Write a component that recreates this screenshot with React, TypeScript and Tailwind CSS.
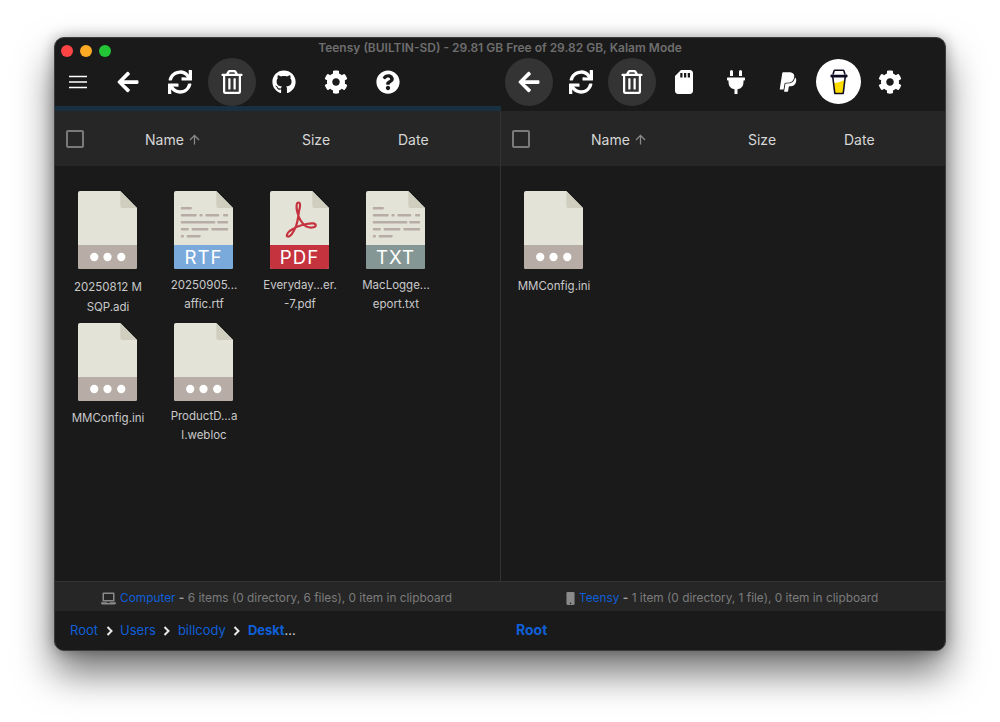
import React from "react";
import { FaArrowLeft, FaSync, FaRegTrashAlt, FaGithub, FaCog, FaQuestionCircle, FaSdCard, FaPlug, FaPaypal, FaLaptop, FaMobile } from "react-icons/fa";
import { MdArrowUpward } from "react-icons/md";

const font = "font-['Inter','Liberation_Sans',sans-serif]";

function Lines() {
  const rows = [
    [[7, 11]],
    [[7, 16], [26, 3], [32, 14], [50, 5]],
    [[7, 35], [44, 11]],
    [[7, 8], [18, 17], [38, 17]],
    [[7, 3], [13, 14]],
  ];
  return (
    <g fill="#b8aca6">
      {rows.map((r, i) => r.map((s, j) => <rect key={`${i}-${j}`} x={s[0]} y={16 + i * 7} width={s[1]} height="2.4" rx="0.6" />))}
    </g>
  );
}

function FileIcon({ kind }: { kind: "blank" | "rtf" | "pdf" | "txt" }) {
  const band = kind === "blank" ? "#b8aca6" : kind === "rtf" ? "#7aa9dc" : kind === "pdf" ? "#c5333f" : "#859795";
  return (
    <svg width="59" height="78" viewBox="0 0 60 78" preserveAspectRatio="none" className="block mr-[2px]">
      <path d="M2 0H43L60 17V76a2 2 0 0 1-2 2H2a2 2 0 0 1-2-2V2a2 2 0 0 1 2-2Z" fill="#e4e3d8" />
      <path d="M43 0L60 17H45a2 2 0 0 1-2-2Z" fill="#cfcebf" />
      <path d="M0 54H60V76a2 2 0 0 1-2 2H2a2 2 0 0 1-2-2Z" fill={band} />
      {kind === "blank" && (
        <g fill="#fff">
          <circle cx="16.5" cy="66" r="4.2" />
          <circle cx="30" cy="66" r="4.2" />
          <circle cx="44" cy="66" r="4.2" />
        </g>
      )}
      {(kind === "rtf" || kind === "txt") && <Lines />}
      {kind === "pdf" && (
        <path
          d="M29.5 20C31 15 31 11.5 29 11.5C27 11.5 26.5 15 27.5 20C29 27 33 33 37 35.5C40 37 46 37 46.5 34.5C47 32 42 32 37 33C30 34.5 24 37 20 40C17 42.5 16.5 45 18 45.5C20.5 46 24 41 26.5 35C28 31 29 24 29.5 20Z"
          fill="none"
          stroke="#c5333f"
          strokeWidth="2.2"
          strokeLinejoin="round"
        />
      )}
      {kind !== "blank" && (
        <text x="30" y="73" textAnchor="middle" fill="#fff" fontSize="19" letterSpacing="1" style={{ fontFamily: "Inter, sans-serif" }}>
          {kind.toUpperCase()}
        </text>
      )}
    </svg>
  );
}

function FileItem({ kind, l1, l2, gap = "mt-[7px]", lead = "leading-[19px]" }: { kind: "blank" | "rtf" | "pdf" | "txt"; l1: string; l2?: string; gap?: string; lead?: string }) {
  return (
    <div className="w-[96px] h-[132px] flex flex-col items-center">
      <FileIcon kind={kind} />
      <div className={`${gap} ${lead} text-[11.5px] text-[#c9c9c9] text-center whitespace-nowrap`}>
        <div>{l1}</div>
        {l2 && <div>{l2}</div>}
      </div>
    </div>
  );
}

function Header({ left }: { left: string }) {
  return (
    <div className={`h-[55px] bg-[#262626] flex items-center pt-[2px] text-[14px] text-[#d6d6d6] ${left}`}>
      <span className="block w-[18px] h-[18px] border-2 border-[#7a7a7a] rounded-[2px] -mt-[1px]" />
      <div className="ml-[61px] w-[157px] flex items-center gap-[3px]">
        Name
        <MdArrowUpward className="text-[#8a8a8a]" size={15} />
      </div>
      <div className="w-[96px]">Size</div>
      <div>Date</div>
    </div>
  );
}

function Circle({ children, on, extra = "" }: { children: React.ReactNode; on?: boolean; extra?: string }) {
  return (
    <div className={`w-[48px] h-[48px] shrink-0 rounded-full flex items-center justify-center text-white ${on ? "bg-[#343434]" : ""} ${extra}`}>
      {children}
    </div>
  );
}

function Coffee() {
  return (
    <svg width="20" height="26" viewBox="0 0 20 26">
      <path d="M4.6 14C8 14 12 13 15.4 11L14 24.5H6Z" fill="#ffdd00" />
      <path d="M3.8 8L5.8 24.5H14.2L16.2 8" fill="none" stroke="#0d0c22" strokeWidth="1.6" strokeLinejoin="round" />
      <rect x="1.5" y="5.5" width="17" height="3" rx="1" fill="#0d0c22" />
      <path d="M4 5.5L5 2a1 1 0 0 1 1-.8H14a1 1 0 0 1 1 .8L16 5.5" fill="#fff" stroke="#0d0c22" strokeWidth="1.6" />
    </svg>
  );
}

function Chevron() {
  return (
    <svg width="7" height="10" viewBox="0 0 7 10" className="shrink-0 mx-[7.5px]">
      <path d="M1.5 1L5.5 5L1.5 9" fill="none" stroke="#e8e8e8" strokeWidth="2" />
    </svg>
  );
}

export default function App() {
  return (
    <div className={`w-[1000px] h-[722px] bg-white pt-[37px] pl-[54px] overflow-hidden ${font}`}>
      <div className="w-[892px] h-[614px] rounded-[10px] bg-[#1a1a1a] overflow-hidden border border-[#3c3c3c] shadow-[0_22px_38px_rgba(0,0,0,0.55),0_0_14px_rgba(0,0,0,0.3)] flex flex-col">
        <div className="h-[19px] shrink-0 grid grid-cols-[1fr_auto_1fr] items-center">
          <div className="flex gap-[7px] pl-[6px] pt-[7px]">
            <span className="w-[12px] h-[12px] rounded-full bg-[#fd4444]" />
            <span className="w-[12px] h-[12px] rounded-full bg-[#fdaa24]" />
            <span className="w-[12px] h-[12px] rounded-full bg-[#23c435]" />
          </div>
          <div className="text-[12px] font-semibold text-[#6e6e6e] whitespace-nowrap pt-[1px]">
            Teensy (BUILTIN-SD) - 29.81 GB Free of 29.82 GB, Kalam Mode
          </div>
          <div />
        </div>

        <div className="h-[49px] shrink-0 flex items-center">
          <div className="w-[446px] flex items-center gap-[4px]">
            <div className="w-[45px] h-[48px] flex items-center justify-center">
              <svg width="18" height="14" viewBox="0 0 18 14">
                <path d="M0 1.5H18M0 7H18M0 12.5H18" stroke="#fff" strokeWidth="1.6" />
              </svg>
            </div>
            <Circle><FaArrowLeft size={24} /></Circle>
            <Circle><FaSync size={24} /></Circle>
            <Circle on><FaRegTrashAlt size={24} /></Circle>
            <Circle><FaGithub size={24} /></Circle>
            <Circle><FaCog size={24} /></Circle>
            <Circle><FaQuestionCircle size={24} /></Circle>
          </div>
          <div className="flex items-center gap-[4px] pl-[4px]">
            <Circle on><FaArrowLeft size={24} /></Circle>
            <Circle><FaSync size={24} /></Circle>
            <Circle on extra="-ml-[1px]"><FaRegTrashAlt size={24} /></Circle>
            <Circle><FaSdCard size={24} /></Circle>
            <Circle><FaPlug size={24} /></Circle>
            <Circle><FaPaypal size={22} /></Circle>
            <div className="w-[45px] h-[45px] rounded-full bg-white flex items-center justify-center shrink-0 mr-[1px]"><Coffee /></div>
            <Circle><FaCog size={24} /></Circle>
          </div>
        </div>

        <div className="flex-1 min-h-0 flex flex-col">
          <div className="h-[5px] shrink-0 flex">
            <div className="w-[446px] bg-[#18303f]" />
          </div>
          <div className="flex flex-1 min-h-0">
            <div className="w-[446px] border-r border-[#333] flex flex-col">
              <Header left="pl-[11px]" />
              <div className="flex-1 flex flex-wrap content-start pl-[5px] pt-[25px]">
                <FileItem kind="blank" l1="20250812 M" l2="SQP.adi" gap="mt-[8px]" lead="leading-[20px]" />
                <FileItem kind="rtf" l1="20250905..." l2="affic.rtf" gap="mt-[7px]" />
                <FileItem kind="pdf" l1="Everyday...er." l2="-7.pdf" gap="mt-[7px]" />
                <FileItem kind="txt" l1="MacLogge..." l2="eport.txt" gap="mt-[7px]" />
                <FileItem kind="blank" l1="MMConfig.ini" gap="mt-[8px]" />
                <FileItem kind="blank" l1="ProductD...a" l2="l.webloc" gap="mt-[6px]" />
              </div>
            </div>
            <div className="flex-1 flex flex-col">
              <Header left="pl-[11px]" />
              <div className="flex-1 flex flex-wrap content-start pl-[5px] pt-[25px]">
                <FileItem kind="blank" l1="MMConfig.ini" gap="mt-[8px]" />
              </div>
            </div>
          </div>
        </div>

        <div className="h-[30px] shrink-0 bg-[#262626] border-t border-[#333] pt-[4px] flex text-[11.85px] text-[#7c7c7c]">
          <div className="w-[446px] flex items-center pl-[46px] gap-[4px]">
            <FaLaptop size={15} className="text-[#8a8a8a]" />
            <span><span className="text-[#0f5fd8]">Computer</span> <b className="text-[#a0a0a0]">-</b> 6 items (0 directory, 6 files), 0 item in clipboard</span>
          </div>
          <div className="flex-1 flex items-center pl-[63px] gap-[2px]">
            <FaMobile size={13} className="text-[#8a8a8a]" />
            <span><span className="text-[#0f5fd8]">Teensy</span> <b className="text-[#a0a0a0]">-</b> 1 item (0 directory, 1 file), 0 item in clipboard</span>
          </div>
        </div>

        <div className="h-[39px] shrink-0 flex text-[#0f5fd8]">
          <div className="w-[446px] flex items-center pl-[15px] text-[13px]">
            <span>Root</span><Chevron /><span>Users</span><Chevron /><span>billcody</span><Chevron />
            <span className="font-bold">Deskt</span><span className="text-[#d0d0d0]">...</span>
          </div>
          <div className="flex-1 flex items-center pl-[15px] pb-[2px] text-[14px] font-bold">Root</div>
        </div>
      </div>
    </div>
  );
}
